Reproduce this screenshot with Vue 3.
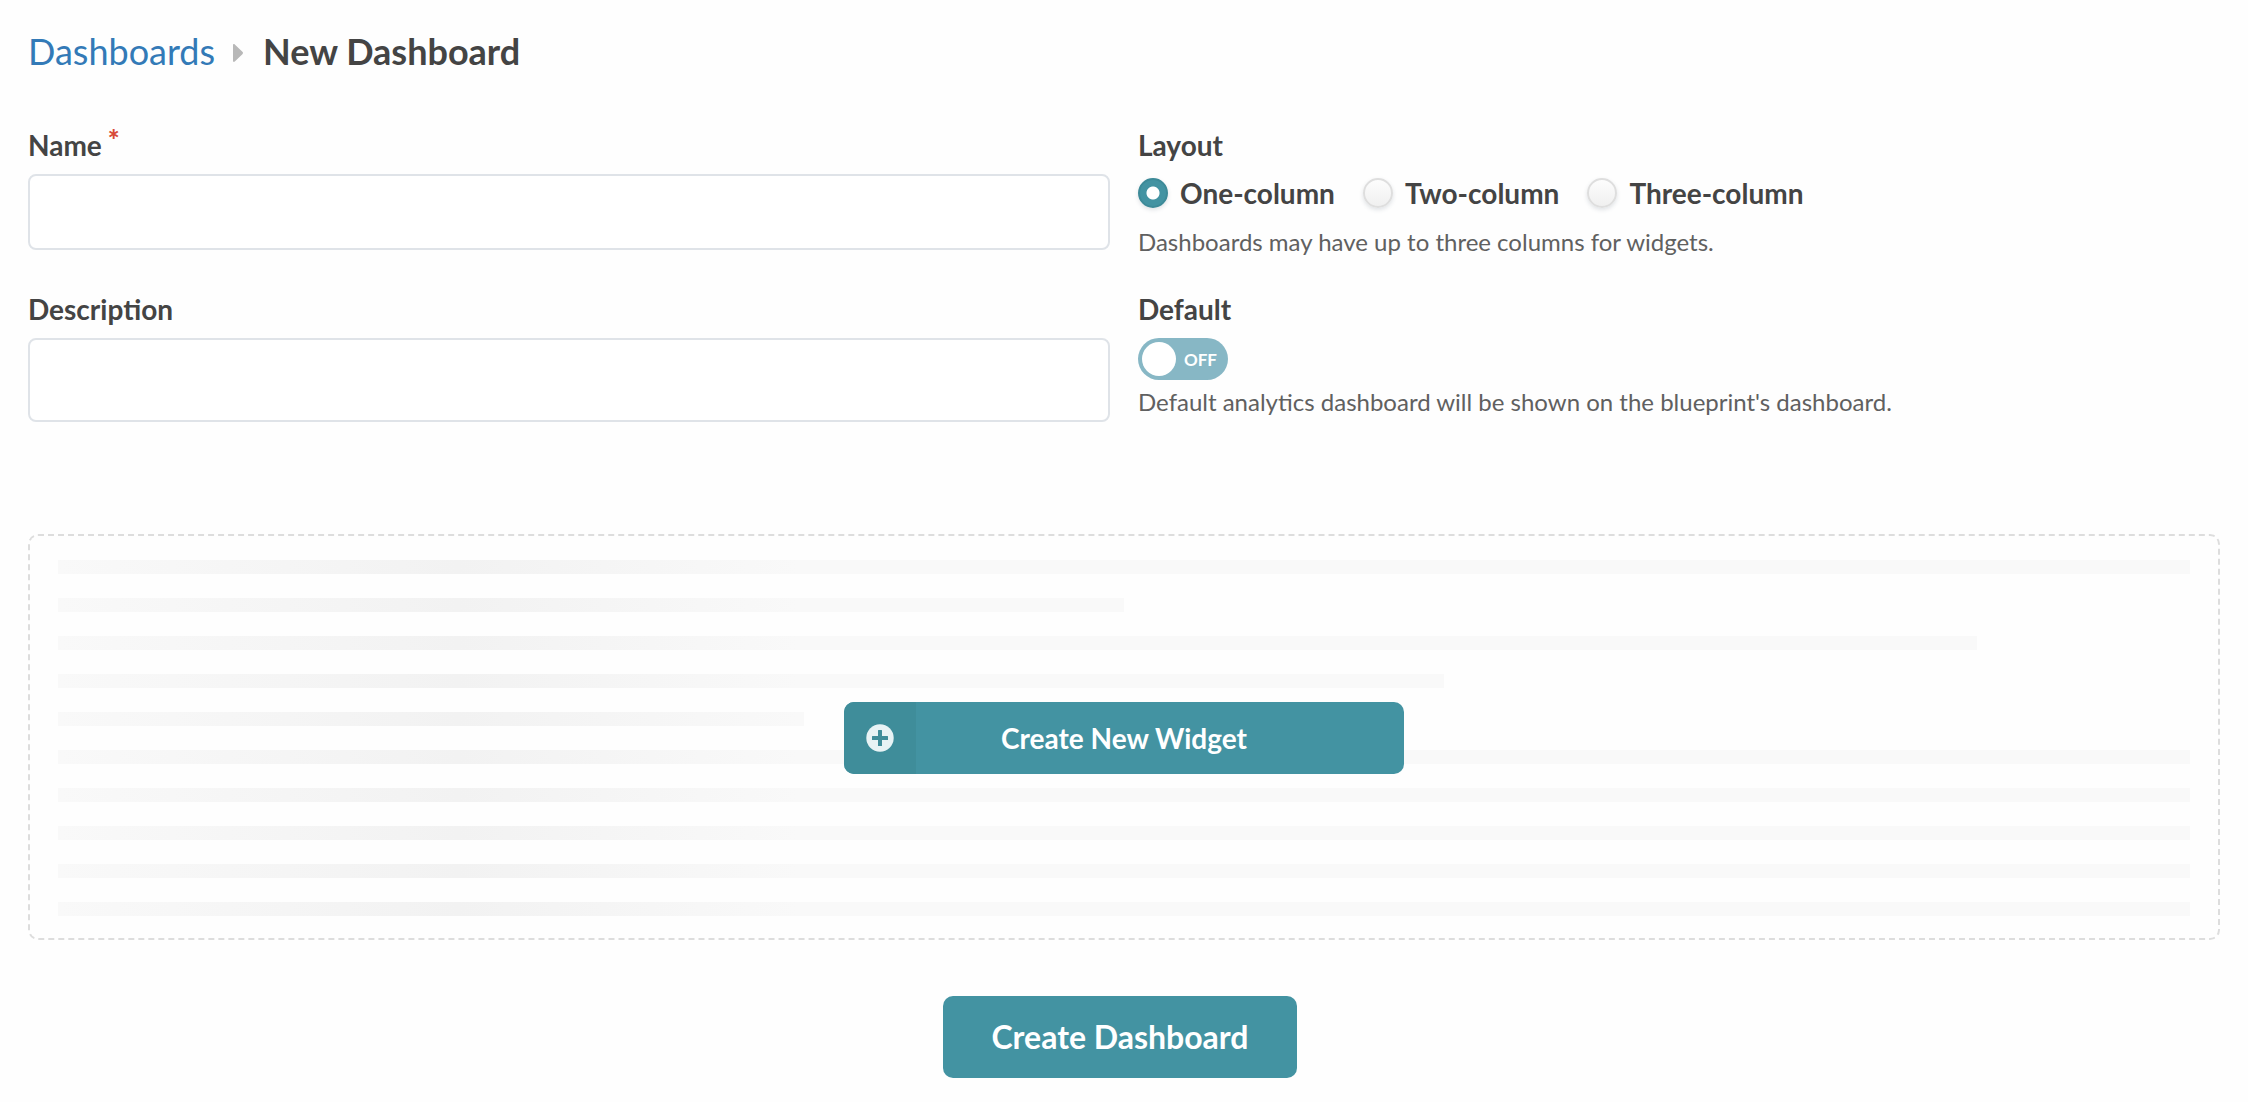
<script setup>
import { ref } from 'vue'

const name = ref('')
const description = ref('')
const layout = ref('one')
const isDefault = ref(false)

const layouts = [
  { value: 'one', label: 'One-column' },
  { value: 'two', label: 'Two-column' },
  { value: 'three', label: 'Three-column' }
]

const placeholderLines = [100, 50, 90, 65, 35, 100, 100, 100, 100, 100]
</script>

<template>
  <main class="page">
    <nav class="breadcrumb" aria-label="Breadcrumb">
      <a href="#dashboards">Dashboards</a>
      <svg class="arrow" viewBox="0 0 12 20" aria-hidden="true">
        <path d="M1 2.200C1 .9 2 .7 2.800 1.500l7.600 7.300c.8.8.8 1.600 0 2.400l-7.600 7.300C2 19.300 1 19.100 1 17.800z" />
      </svg>
      <h1>New Dashboard</h1>
    </nav>

    <form class="form" @submit.prevent>
      <div class="fields">
        <div class="field">
          <label class="title" for="name">Name<span class="required">*</span></label>
          <input id="name" v-model="name" class="box" type="text" required />
        </div>

        <fieldset class="field">
          <legend class="title">Layout</legend>
          <div class="radios">
            <label v-for="item in layouts" :key="item.value" class="option">
              <input v-model="layout" type="radio" name="layout" :value="item.value" />
              <span>{{ item.label }}</span>
            </label>
          </div>
          <p class="help">Dashboards may have up to three columns for widgets.</p>
        </fieldset>

        <div class="field">
          <label class="title" for="description">Description</label>
          <textarea id="description" v-model="description" class="box tall"></textarea>
        </div>

        <div class="field">
          <label class="title" for="default">Default</label>
          <label class="switch" :class="{ on: isDefault }">
            <input id="default" v-model="isDefault" type="checkbox" role="switch" />
            <span class="knob"></span>
            <span class="state">{{ isDefault ? 'ON' : 'OFF' }}</span>
          </label>
          <p class="help">Default analytics dashboard will be shown on the blueprint's dashboard.</p>
        </div>
      </div>

      <section class="widgets">
        <div class="lines" aria-hidden="true">
          <div v-for="(width, i) in placeholderLines" :key="i" class="line" :style="{ width: width + '%' }"></div>
        </div>
        <button class="create-widget" type="button">
          <span class="icon">
            <svg viewBox="0 0 28 28" aria-hidden="true">
              <circle cx="14" cy="14" r="13.700" fill="#e8f3f5" />
              <path d="M12 6.500q0-.5.500-.5h3q.5 0 .5.500V12h5.500q.5 0 .5.500v3q0 .5-.5.500H16v5.500q0 .5-.5.500h-3q-.5 0-.5-.500V16H6.500q-.5 0-.5-.500v-3q0-.5.500-.500H12z" fill="#3f8d9a" />
            </svg>
          </span>
          <span class="caption">Create New Widget</span>
        </button>
      </section>

      <div class="actions">
        <button class="create-dashboard" type="submit">Create Dashboard</button>
      </div>
    </form>
  </main>
</template>

<style>
body {
  margin: 0;
  background: #fefefe;
}
</style>

<style scoped>
.page {
  box-sizing: border-box;
  padding: 28px 28px 24px;
  color: #444;
  font-family: Lato, "Open Sans", sans-serif;
  font-size: 28px;
}

.breadcrumb {
  display: flex;
  align-items: center;
  font-size: 36px;
  line-height: 46px;
}

.breadcrumb a {
  color: #337ab7;
  text-decoration: none;
}

.breadcrumb h1 {
  margin: 0;
  font-size: inherit;
  font-weight: 700;
}

.arrow {
  width: 12px;
  height: 20px;
  margin: 4px 19px 0 17px;
  fill: #b8b8b8;
}

.fields {
  display: grid;
  grid-template-columns: 1fr 1fr;
  gap: 32px 28px;
  padding-top: 52px;
}

.field {
  display: flex;
  flex-direction: column;
  align-items: flex-start;
  min-width: 0;
  margin: 0;
  padding: 0;
  border: 0;
}

.title {
  display: block;
  height: 48px;
  padding: 0;
  font-weight: 700;
  line-height: 38px;
}

.required {
  margin-left: 6px;
  color: #d84a38;
  font-size: 28px;
  font-weight: 900;
  line-height: 0;
  vertical-align: 6px;
}

.box {
  box-sizing: border-box;
  display: block;
  width: 100%;
  height: 76px;
  margin: 0;
  padding: 12px 20px;
  border: 2px solid #dfe3e8;
  border-radius: 8px;
  background: #fff;
  color: inherit;
  font: inherit;
  resize: none;
}

.box.tall {
  height: 84px;
}

.radios {
  display: flex;
  gap: 28px;
  padding-bottom: 8px;
}

.option {
  display: flex;
  align-items: center;
  gap: 12px;
  font-weight: 700;
  line-height: 38px;
}

.option input {
  appearance: none;
  box-sizing: border-box;
  width: 30px;
  height: 30px;
  margin: 0;
  border: 2px solid #dedede;
  border-radius: 50%;
  background: linear-gradient(#fdfdfd, #f0f0f0);
  box-shadow: 0 2px 4px rgba(60, 80, 100, 0.16);
}

.option input:checked {
  border-color: #3d8a98;
  background: radial-gradient(circle, #fff 6px, #4393a2 7px);
}

.help {
  margin: 0;
  padding-top: 6px;
  color: #606060;
  font-size: 24px;
  line-height: 32px;
}

.switch {
  box-sizing: border-box;
  display: flex;
  align-items: center;
  gap: 8px;
  width: 90px;
  height: 42px;
  padding: 0 4px;
  border-radius: 21px;
  background: #87b7c5;
  color: #fff;
  font-size: 17px;
  font-weight: 700;
}

.switch input {
  position: absolute;
  opacity: 0;
  pointer-events: none;
}

.switch.on {
  flex-direction: row-reverse;
  background: #4393a2;
}

.knob {
  width: 34px;
  height: 34px;
  border-radius: 50%;
  background: #fff;
}

.widgets {
  display: grid;
  align-items: center;
  margin-top: 112px;
  padding: 24px 28px 22px;
  border: 2px dashed #ddd;
  border-radius: 10px;
}

.lines,
.create-widget {
  grid-area: 1 / 1;
}

.lines {
  display: flex;
  flex-direction: column;
  gap: 24px;
}

.line {
  height: 14px;
  background: linear-gradient(to right, #f9f9f9 0, #f2f2f2 400px, #f9f9f9 740px);
}

button {
  border: 0;
  border-radius: 10px;
  background: #4393a2;
  color: #fff;
  font-family: inherit;
  font-weight: 700;
  cursor: pointer;
}

.create-widget {
  display: grid;
  grid-template-columns: 72px 1fr 72px;
  justify-self: center;
  width: 560px;
  height: 72px;
  padding: 0;
  overflow: hidden;
  font-size: 28px;
  line-height: 72px;
}

.icon {
  display: flex;
  align-items: center;
  justify-content: center;
  background: #3f8d9a;
}

.icon svg {
  width: 28px;
  height: 28px;
}

.actions {
  display: flex;
  justify-content: center;
  padding: 56px 8px 0 0;
}

.create-dashboard {
  padding: 0 48px;
  font-size: 32px;
  line-height: 82px;
}
</style>
